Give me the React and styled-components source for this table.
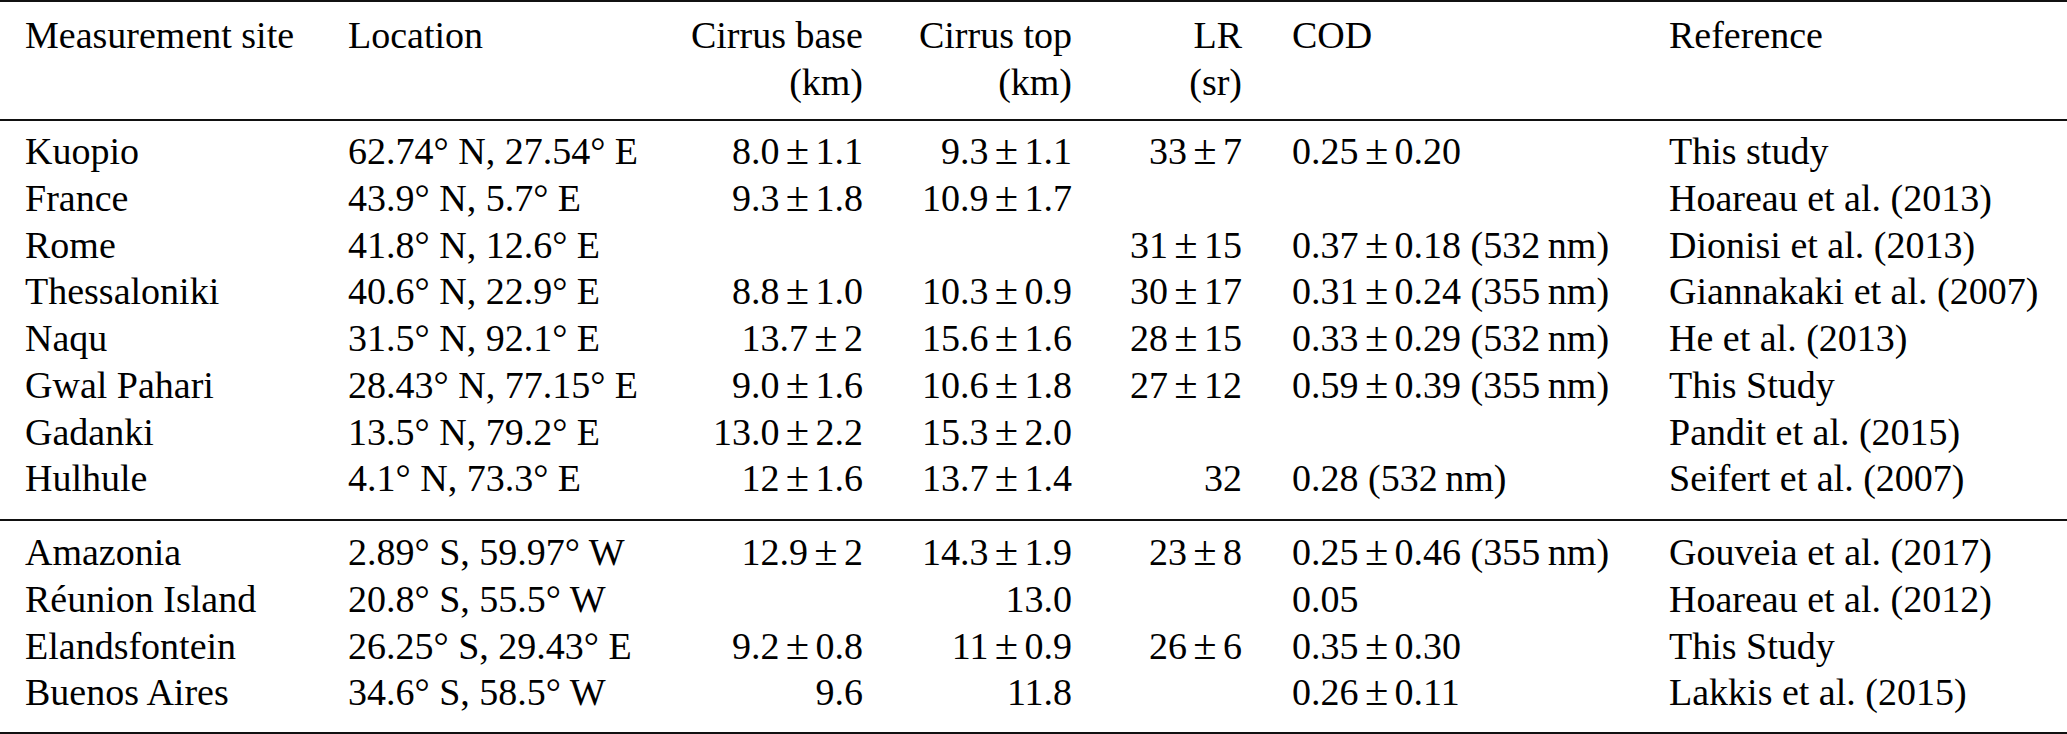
import React from "react";
import styled, { createGlobalStyle } from "styled-components";

const GlobalStyle = createGlobalStyle`
  html, body {
    margin: 0;
    padding: 0;
    background: #fff;
  }
`;

const Table = styled.div`
  width: 2067px;
  font-family: "Liberation Serif", "Times New Roman", serif;
  font-size: 38px;
  line-height: 46.75px;
  color: #000;
  border-top: 2px solid #111;
  border-bottom: 2px solid #111;
`;

const Section = styled.div`
  padding: ${(p) => p.$pad};
  border-bottom: ${(p) => (p.$rule ? "2px solid #111" : "none")};
`;

const Row = styled.div`
  display: grid;
  grid-template-columns: 323px 340px 225px 209px 170px 377px 423px;
`;

const Cell = styled.div`
  padding: 0 25px;
  white-space: nowrap;
  text-align: ${(p) => (p.$right ? "right" : "left")};
`;

const Pm = styled.span`
  font-size: 1.12em;
  line-height: 1;
  margin: 0 0.15em;
`;

const columns = [
  { label: ["Measurement site"] },
  { label: ["Location"] },
  { label: ["Cirrus base", "(km)"], right: true },
  { label: ["Cirrus top", "(km)"], right: true },
  { label: ["LR", "(sr)"], right: true },
  { label: ["COD"] },
  { label: ["Reference"] },
];

const north = [
  ["Kuopio", "62.74° N, 27.54° E", "8.0 ± 1.1", "9.3 ± 1.1", "33 ± 7", "0.25 ± 0.20", "This study"],
  ["France", "43.9° N, 5.7° E", "9.3 ± 1.8", "10.9 ± 1.7", "", "", "Hoareau et al. (2013)"],
  ["Rome", "41.8° N, 12.6° E", "", "", "31 ± 15", "0.37 ± 0.18 (532 nm)", "Dionisi et al. (2013)"],
  ["Thessaloniki", "40.6° N, 22.9° E", "8.8 ± 1.0", "10.3 ± 0.9", "30 ± 17", "0.31 ± 0.24 (355 nm)", "Giannakaki et al. (2007)"],
  ["Naqu", "31.5° N, 92.1° E", "13.7 ± 2", "15.6 ± 1.6", "28 ± 15", "0.33 ± 0.29 (532 nm)", "He et al. (2013)"],
  ["Gwal Pahari", "28.43° N, 77.15° E", "9.0 ± 1.6", "10.6 ± 1.8", "27 ± 12", "0.59 ± 0.39 (355 nm)", "This Study"],
  ["Gadanki", "13.5° N, 79.2° E", "13.0 ± 2.2", "15.3 ± 2.0", "", "", "Pandit et al. (2015)"],
  ["Hulhule", "4.1° N, 73.3° E", "12 ± 1.6", "13.7 ± 1.4", "32", "0.28 (532 nm)", "Seifert et al. (2007)"],
];

const south = [
  ["Amazonia", "2.89° S, 59.97° W", "12.9 ± 2", "14.3 ± 1.9", "23 ± 8", "0.25 ± 0.46 (355 nm)", "Gouveia et al. (2017)"],
  ["Réunion Island", "20.8° S, 55.5° W", "", "13.0", "", "0.05", "Hoareau et al. (2012)"],
  ["Elandsfontein", "26.25° S, 29.43° E", "9.2 ± 0.8", "11 ± 0.9", "26 ± 6", "0.35 ± 0.30", "This Study"],
  ["Buenos Aires", "34.6° S, 58.5° W", "9.6", "11.8", "", "0.26 ± 0.11", "Lakkis et al. (2015)"],
];

// "a ± b (532 nm)" -> tight math spacing round ± and a thin space before nm
function Value({ text }) {
  const parts = text.replace(" nm", "\u2009nm").split(" ± ");
  return (
    <>
      {parts.map((p, i) => (
        <React.Fragment key={i}>
          {i > 0 && <Pm>±</Pm>}
          {p}
        </React.Fragment>
      ))}
    </>
  );
}

function DataRows({ rows }) {
  return rows.map((r) => (
    <Row key={r[0]}>
      {r.map((v, i) => (
        <Cell key={i} $right={columns[i].right}>
          <Value text={v} />
        </Cell>
      ))}
    </Row>
  ));
}

export default function App() {
  return (
    <>
      <GlobalStyle />
      <Table>
        <Section $pad="10px 0 13.5px" $rule>
          <Row>
            {columns.map((c) => (
              <Cell key={c.label[0]} $right={c.right}>
                {c.label.map((l, i) => (
                  <div key={i}>{l}</div>
                ))}
              </Cell>
            ))}
          </Row>
        </Section>
        <Section $pad="7px 0 17px" $rule>
          <DataRows rows={north} />
        </Section>
        <Section $pad="8px 0 16px">
          <DataRows rows={south} />
        </Section>
      </Table>
    </>
  );
}
